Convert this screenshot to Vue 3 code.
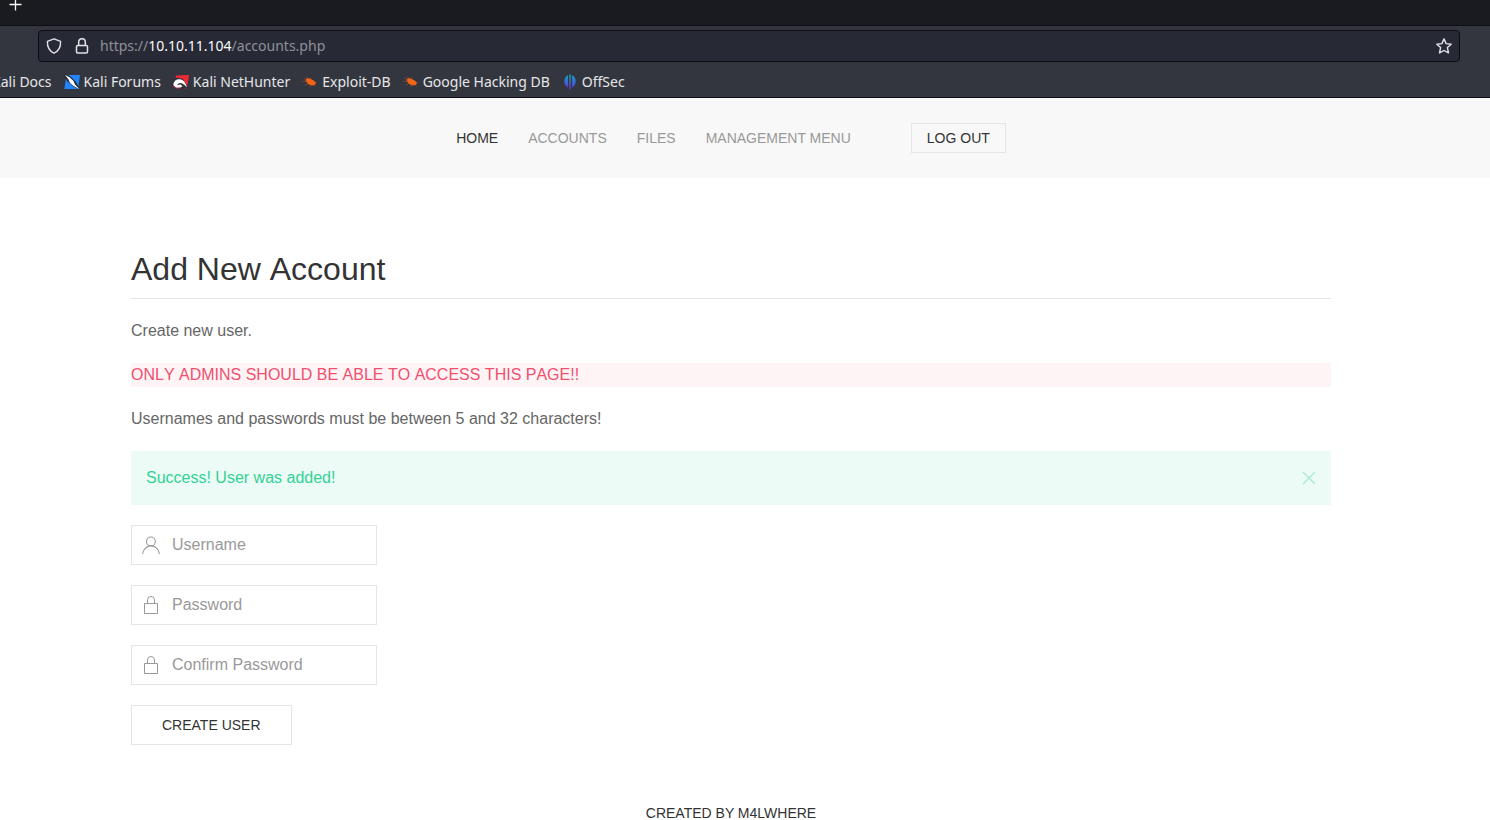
<script setup>
import { ref } from 'vue'

const bookmarks = [
  { name: 'Kali Docs', icon: '' },
  { name: 'Kali Forums', icon: 'forums' },
  { name: 'Kali NetHunter', icon: 'nethunter' },
  { name: 'Exploit-DB', icon: 'bug' },
  { name: 'Google Hacking DB', icon: 'bug' },
  { name: 'OffSec', icon: 'offsec' },
]
const links = [
  { name: 'Home', active: true },
  { name: 'Accounts' },
  { name: 'Files' },
  { name: 'Management Menu' },
]
const fields = [
  { id: 'username', label: 'Username', type: 'text', icon: 'user' },
  { id: 'password', label: 'Password', type: 'password', icon: 'lock' },
  { id: 'confirm', label: 'Confirm Password', type: 'password', icon: 'lock' },
]
const values = ref({ username: '', password: '', confirm: '' })
const alertOpen = ref(true)
</script>

<template>
  <div class="viewport">
    <div class="window">
      <header class="browser">
        <div class="tabs">
          <button class="icon-button" type="button" aria-label="New tab">
            <svg width="14" height="14" viewBox="0 0 14 14" fill="none" stroke="#fbfbfe" stroke-width="1.3">
              <path d="M7.5 1.5v12M1.5 7.5h12" />
            </svg>
          </button>
        </div>
        <div class="toolbar">
          <div class="address">
            <svg width="16" height="16" viewBox="0 0 16 16" fill="none" stroke="#e2e2e6" stroke-width="1.4" stroke-linejoin="round">
              <path d="M8 .8 14.6 3.3c.2 5-1.6 9.7-6.6 11.9C3 13 1.2 8.3 1.4 3.3Z" />
            </svg>
            <svg class="padlock" width="16" height="16" viewBox="0 0 16 16" fill="none" stroke="#e2e2e6" stroke-width="1.5">
              <rect x="2.5" y="7.5" width="11" height="7.5" rx="1.2" />
              <path d="M4.7 7.5V4a3.3 3.3 0 0 1 6.6 0v3.5" />
            </svg>
            <div class="url">https://<span class="host">10.10.11.104</span>/accounts.php</div>
            <button class="icon-button" type="button" aria-label="Bookmark this page">
              <svg width="16" height="16" viewBox="0 0 16 16" fill="none" stroke="#e2e2e6" stroke-width="1.4" stroke-linejoin="round">
                <path d="m8 .9 2.1 4.7 5.1.6-3.8 3.4 1.100 5.3L8 12.500l-4.500 2.400 1.100-5.300L.8 6.200l5.100-.6Z" />
              </svg>
            </button>
          </div>
        </div>
        <nav class="bookmarks" aria-label="Bookmarks">
          <a v-for="b in bookmarks" :key="b.name" href="#">
            <svg v-if="b.icon === 'forums'" width="16" height="16" viewBox="0 0 16 16">
              <path d="M2.500 1H16L14.200 15H.300Z" fill="#2484fa" />
              <path d="M0 0 6 2 12 8 16 15.500 10 13 3 7Z" fill="#252a36" />
              <path d="m1 1 4.500 2.200 4 3.800 1.500 3.500 4.500 4.700-5.500-3-4-3.200-1.500-3.500Z" fill="#fff" />
            </svg>
            <svg v-else-if="b.icon === 'nethunter'" width="16" height="16" viewBox="0 0 16 16">
              <path d="M3 1.500 16 1 14 14.500H1Z" fill="#ef2936" />
              <path d="M0 5 5 3.500 10 5 15.500 14 9 15H0Z" fill="#33313a" />
              <path d="M.500 9.500C1.500 6 4.500 4.500 8 5.500s5 4.500 6 8c-2-2-3.500-4-6-4.500-2-.4-3 .5-4 2l3.500-.5 2 1.700-3 1.800H2.500L.500 12Z" fill="#fff" />
              <path d="M.500 11.500 3 14h4" fill="none" stroke="#d51c42" />
            </svg>
            <svg v-else-if="b.icon === 'bug'" width="16" height="16" viewBox="0 0 16 16">
              <path d="m3.500 6 1.700-2 3.300.8 3.500 2 2 2.200-1 1.800-3 .7-3.500-1.300L4.500 8Z" fill="#f36415" />
              <path d="m6 5-1.500-2.500M8 5l1.500-1.500M5 7 .5 7.500M6 9.500l-3 1.700M9 11l-1.500 2M12 11l1.500 1M13 8.500h2M4 5 1.500 4.500" fill="none" stroke="#a4532a" stroke-width=".6" />
            </svg>
            <svg v-else-if="b.icon === 'offsec'" width="16" height="16" viewBox="0 0 16 16">
              <defs>
                <linearGradient id="offsec-fill" x2="0" y2="1">
                  <stop stop-color="#12a5b7" /><stop offset=".5" stop-color="#3969d0" /><stop offset="1" stop-color="#6532cf" />
                </linearGradient>
              </defs>
              <path d="M6 1v12.600A7.200 7.200 0 0 1 6 1ZM10 1v12.600A7.200 7.200 0 0 0 10 1ZM7.200 .5h1.600v15H7.200Z" fill="url(#offsec-fill)" />
            </svg>
            <span>{{ b.name }}</span>
          </a>
        </nav>
      </header>

      <nav class="navbar" aria-label="Main">
        <a v-for="l in links" :key="l.name" href="#" :class="{ active: l.active }">{{ l.name }}</a>
        <button class="button small" type="button">Log Out</button>
      </nav>

      <main class="content">
        <h1>Add New Account</h1>
        <p>Create new user.</p>
        <p class="danger">ONLY ADMINS SHOULD BE ABLE TO ACCESS THIS PAGE!!</p>
        <p>Usernames and passwords must be between 5 and 32 characters!</p>
        <div v-if="alertOpen" class="alert" role="status">
          <span>Success! User was added!</span>
          <button class="icon-button close" type="button" aria-label="Close" @click="alertOpen = false">
            <svg width="14" height="14" viewBox="0 0 14 14" fill="none" stroke="currentColor" stroke-width="1.1">
              <path d="m1 1 12 12M13 1 1 13" />
            </svg>
          </button>
        </div>
        <form @submit.prevent>
          <div v-for="f in fields" :key="f.id" class="field">
            <label :for="f.id" :aria-label="f.label">
              <svg v-if="f.icon === 'user'" width="20" height="20" viewBox="0 0 20 20" fill="none" stroke="currentColor" stroke-width="1.1">
                <circle cx="9.9" cy="6.4" r="4.4" />
                <path d="M1.500 19c.8-4.600 4.300-8.100 8.500-8.100s7.800 3.500 8.500 8" />
              </svg>
              <svg v-else width="20" height="20" viewBox="0 0 20 20" fill="none" stroke="currentColor">
                <path d="M3.500 8.500h13v10h-13ZM6.500 8V4.900a3.500 3.400 0 0 1 7 0V8" />
              </svg>
            </label>
            <input :id="f.id" v-model="values[f.id]" :type="f.type" :placeholder="f.label" />
          </div>
          <button class="button" type="submit">Create User</button>
        </form>
      </main>

      <footer><a href="#">Created by m4lwhere</a></footer>
    </div>
  </div>
</template>

<style>
body {
  margin: 0;
  background: #fff;
}
</style>

<style scoped>
* {
  box-sizing: border-box;
}
.viewport {
  overflow: hidden;
}
/* The window's left edge lies just outside the view. */
.window {
  margin-left: -28px;
  font: 16px/24px "Liberation Sans", Arial, sans-serif;
  color: #666;
}
a {
  color: inherit;
  text-decoration: none;
}
svg {
  display: block;
  flex: none;
}
.icon-button {
  padding: 0;
  border: 0;
  background: none;
  color: inherit;
  cursor: pointer;
}
.browser {
  background: #33363f;
  border-bottom: 1px solid #0c0d11;
  font-family: "Noto Sans", sans-serif;
  font-size: 14px;
  color: #e6e6e8;
}
.tabs {
  display: flex;
  height: 26px;
  padding-left: 36px;
  padding-bottom: 14px;
  align-items: flex-end;
  background: #1a1b20;
  border-bottom: 1px solid #0f1014;
}
.toolbar {
  padding: 4px 30px 4px 66px;
}
.address {
  display: flex;
  align-items: center;
  height: 32px;
  padding: 0 7px;
  background: #272935;
  border: 1px solid #0c0d11;
  border-radius: 4px;
}
.padlock {
  margin-left: 12px;
}
.url {
  flex: 1;
  margin-left: 10px;
  color: #909198;
}
.host {
  color: #fbfbfe;
}
.bookmarks {
  display: flex;
  gap: 12px;
  height: 31px;
  padding-left: 20px;
  align-items: center;
}
.bookmarks a {
  display: flex;
  align-items: center;
  gap: 4px;
  white-space: nowrap;
}
.navbar {
  display: flex;
  justify-content: center;
  align-items: center;
  gap: 30px;
  height: 80px;
  background: #f8f8f8;
  font-size: 14px;
  text-transform: uppercase;
  color: #999;
}
.active {
  color: #333;
}
.button {
  height: 40px;
  padding: 0 30px;
  border: 1px solid #e5e5e5;
  background: transparent;
  font: 14px/38px "Liberation Sans", Arial, sans-serif;
  color: #333;
  text-transform: uppercase;
  cursor: pointer;
}
.button.small {
  height: 30px;
  margin-left: 30px;
  padding: 0 15px;
  line-height: 28px;
}
.content {
  max-width: 1200px;
  margin: 0 auto;
  padding: 70px 0 60px;
}
h1 {
  margin: 0 0 20px;
  padding-bottom: 8px;
  border-bottom: 1px solid #e5e5e5;
  font-size: 32px;
  line-height: 42px;
  font-weight: 400;
  font-kerning: none;
  color: #333;
}
p {
  margin: 0 0 20px;
}
.danger {
  background: #fef4f6;
  font-kerning: none;
  color: #f0506e;
}
.alert {
  display: flex;
  justify-content: space-between;
  align-items: center;
  margin-bottom: 20px;
  padding: 15px;
  background: #edfbf6;
  color: #32d296;
}
.close {
  opacity: 0.4;
}
form {
  display: flex;
  flex-direction: column;
  align-items: flex-start;
  gap: 20px;
}
.field {
  display: flex;
  align-items: center;
  width: 246px;
  height: 40px;
  border: 1px solid #e5e5e5;
  color: #999;
}
.field label {
  flex: none;
  padding: 0 11px 0 9px;
}
.field input {
  flex: 1;
  min-width: 0;
  height: 38px;
  padding: 0;
  border: 0;
  outline: 0;
  background: transparent;
  font: inherit;
  color: #666;
}
.field input::placeholder {
  color: #999;
  opacity: 1;
}
footer {
  text-align: center;
  font-size: 14px;
  line-height: 16px;
  text-transform: uppercase;
  color: #333;
}
</style>
